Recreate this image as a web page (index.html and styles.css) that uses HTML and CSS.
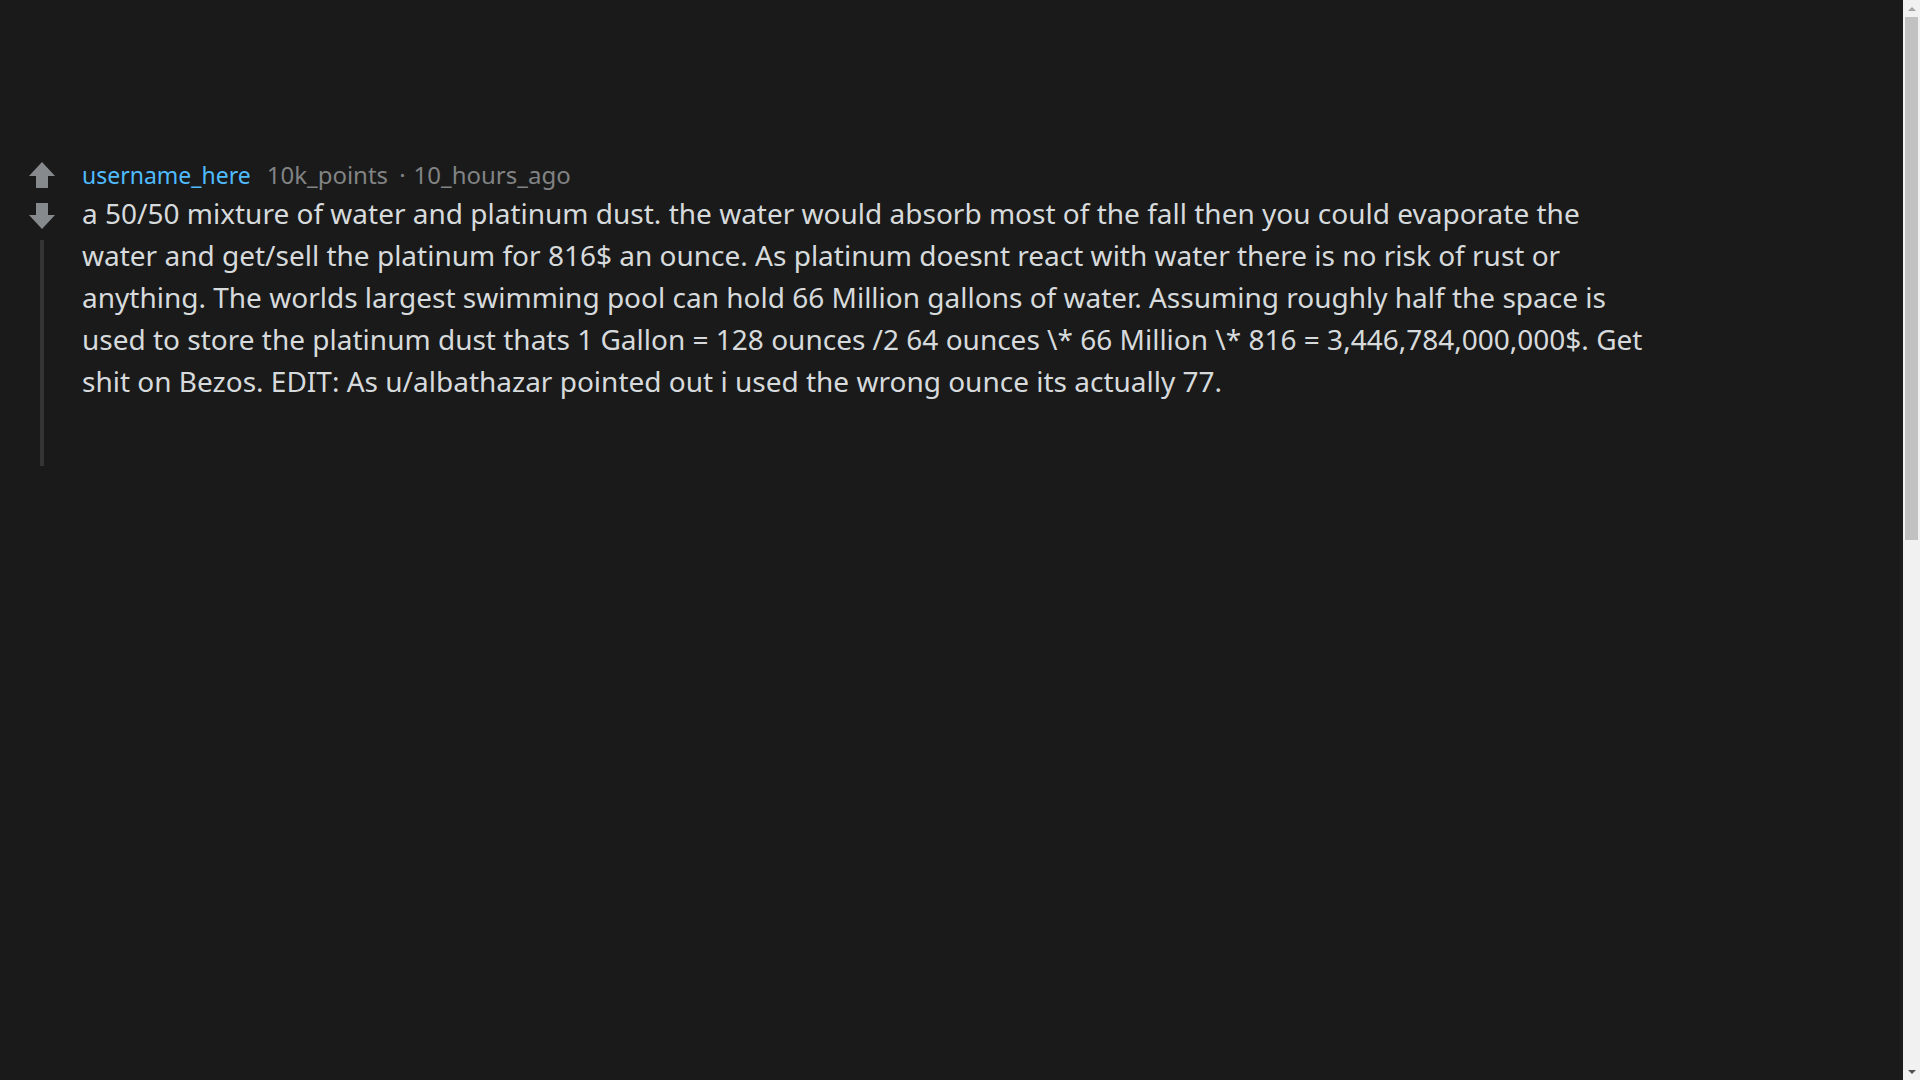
FILE: index.html
```html
<!DOCTYPE html>
<html>
<head>
<meta charset="utf-8">
<link rel="stylesheet" href="styles.css">
</head>
<body>
<div class="page">
  <div class="comment">
    <div class="gutter">
      <button class="vote up" aria-label="upvote">
        <svg width="26" height="26" viewBox="0 0 26 26"><path d="M13 0 L26 14 L19 14 L19 26 L7 26 L7 14 L0 14 Z" fill="#878a8c"/></svg>
      </button>
      <button class="vote down" aria-label="downvote">
        <svg width="26" height="26" viewBox="0 0 26 26"><path d="M13 26 L26 12 L19 12 L19 0 L7 0 L7 12 L0 12 Z" fill="#878a8c"/></svg>
      </button>
      <div class="thread-line"></div>
    </div>
    <div class="content">
      <div class="meta">
        <span class="user">username_here</span>
        <span class="points">10k_points</span>
        <span class="dot">·</span>
        <span class="time">10_hours_ago</span>
      </div>
      <p class="body">a 50/50 mixture of water and platinum dust. the water would absorb most of the fall then you could evaporate the water and get/sell the platinum for 816$ an ounce. As platinum doesnt react with water there is no risk of rust or anything. The worlds largest swimming pool can hold 66 Million gallons of water. Assuming roughly half the space is used to store the platinum dust thats 1 Gallon = 128 ounces /2 64 ounces \* 66 Million \* 816 = 3,446,784,000,000$. Get shit on Bezos. EDIT: As u/albathazar pointed out i used the wrong ounce its actually 77.</p>
    </div>
  </div>
</div>
<div class="scrollbar" aria-hidden="true">
  <div class="sb-btn sb-up"><span></span></div>
  <div class="sb-track"><div class="sb-thumb"></div></div>
  <div class="sb-btn sb-down"><span></span></div>
</div>
</body>
</html>
```
FILE: styles.css
```css
html, body {
  margin: 0;
  padding: 0;
  background: #1a1a1a;
  overflow: hidden;
}
.page {
  height: 100vh;
  padding-top: 160px;
  padding-right: 17px;
  box-sizing: border-box;
}
.comment {
  display: flex;
  align-items: stretch;
}
.gutter {
  width: 82px;
  display: flex;
  flex-direction: column;
  align-items: center;
  padding-top: 2px;
  padding-left: 2px;
  box-sizing: border-box;
  flex-shrink: 0;
}
.vote {
  background: none;
  border: none;
  padding: 0;
  width: 26px;
  height: 26px;
  display: block;
  cursor: pointer;
}
.vote svg { display: block; }
.vote.down { margin-top: 15px; }
.thread-line {
  width: 4px;
  height: 226px;
  background: #343434;
  margin-top: 11px;
}
.content {
  width: 1570px;
}
.meta {
  font-family: "Noto Sans", sans-serif;
  font-size: 24px;
  line-height: 30px;
  color: #818384;
  display: flex;
  align-items: baseline;
}
.meta .user {
  color: #4fbcff;
  font-size: 23px;
  margin-right: 16px;
}
.meta .points {
  margin-right: 1px;
}
.meta .dot {
  margin: 0 8px 0 10px;
}
.body {
  margin: 2px 0 0 0;
  font-family: "Noto Sans", sans-serif;
  font-size: 28px;
  line-height: 42px;
  color: #d7dadc;
}
.scrollbar {
  position: fixed;
  top: 0;
  right: 0;
  width: 17px;
  height: 100vh;
  background: #f1f1f1;
  display: flex;
  flex-direction: column;
}
.sb-btn {
  height: 17px;
  display: flex;
  align-items: center;
  justify-content: center;
  flex-shrink: 0;
}
.sb-btn span {
  width: 0;
  height: 0;
  border-left: 4px solid transparent;
  border-right: 4px solid transparent;
}
.sb-up span {
  border-bottom: 4px solid #a3a3a3;
}
.sb-down span {
  border-top: 4px solid #505050;
}
.sb-track {
  flex: 1;
  padding: 0 2px;
}
.sb-thumb {
  height: 523px;
  background: #c1c1c1;
}
```
